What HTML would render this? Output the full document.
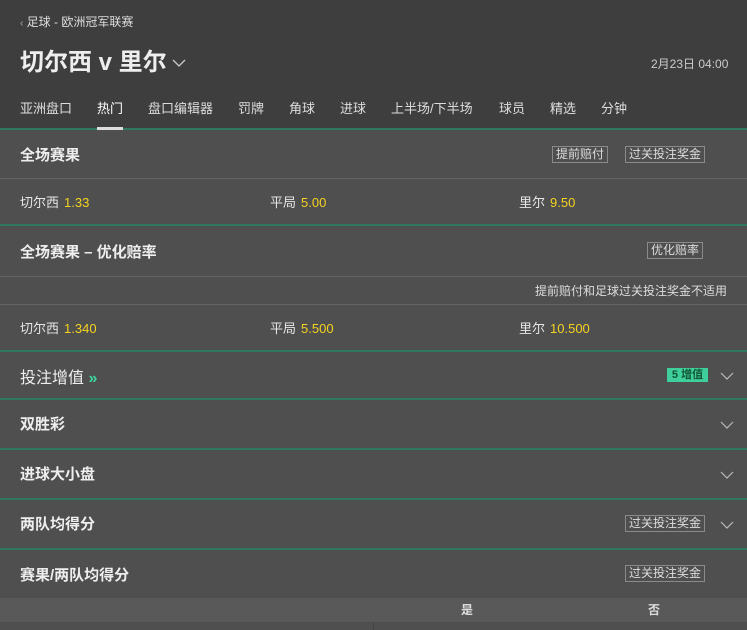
<!DOCTYPE html>
<html><head><meta charset="utf-8"><style>
*{margin:0;padding:0;box-sizing:border-box}
body{width:747px;height:630px;overflow:hidden;background:#4f4f4f;font-family:"Liberation Sans","Noto Sans CJK SC",sans-serif;color:#e6e6e6;position:relative}
.hd{position:absolute;left:0;top:0;width:747px;height:130px;background:#3e3e3e}
.ab{position:absolute;white-space:nowrap}
.g{position:absolute;left:0;width:747px;height:2px;background:#2f7a5f}
.l{position:absolute;left:0;width:747px;height:1px;background:#656565}
.t{font-size:15px;font-weight:bold;color:#eee}
.tag{position:absolute;border:1px solid #8a8a8a;color:#ddd;font-size:12px;line-height:15px;padding:0 3px}
.o{font-size:13px;color:#e6e6e6}
.o b{font-weight:normal;color:#f5d320;margin-left:5px}
.chev{position:absolute;left:720px;width:14px;height:8px}
</style></head><body>
<div class="hd"></div>
<div class="ab" style="left:20px;top:13px;font-size:12px;color:#ddd"><span style="font-size:10px;color:#aaa">‹</span> 足球 - 欧洲冠军联赛</div>
<div class="ab" style="left:20px;top:42px;font-size:24px;font-weight:bold;color:#eee">切尔西 v 里尔</div>
<svg class="ab" style="left:172px;top:59px" width="14" height="8"><path d="M1 1l6 6 6-6" stroke="#ccc" stroke-width="1.3" fill="none"/></svg>
<div class="ab" style="left:651px;top:55px;font-size:12px;color:#ccc">2月23日 04:00</div>
<div class="ab" style="top:98px;left:20px;font-size:13px;color:#ddd">
<span style="position:absolute;left:0">亚洲盘口</span><span style="position:absolute;left:77px;color:#fff">热门</span><span style="position:absolute;left:128px">盘口编辑器</span><span style="position:absolute;left:218px">罚牌</span><span style="position:absolute;left:269px">角球</span><span style="position:absolute;left:320px">进球</span><span style="position:absolute;left:371px">上半场/下半场</span><span style="position:absolute;left:479px">球员</span><span style="position:absolute;left:530px">精选</span><span style="position:absolute;left:581px">分钟</span></div>
<div class="g" style="top:128px"></div>
<div class="ab" style="left:97px;top:127px;width:26px;height:3px;background:#ddd"></div>

<div class="ab t" style="left:20px;top:144px">全场赛果</div>
<div class="tag" style="left:552px;top:146px">提前赔付</div>
<div class="tag" style="left:625px;top:146px">过关投注奖金</div>
<div class="l" style="top:178px"></div>
<div class="ab o" style="left:20px;top:192px">切尔西<b>1.33</b></div>
<div class="ab o" style="left:270px;top:192px">平局<b>5.00</b></div>
<div class="ab o" style="left:519px;top:192px">里尔<b>9.50</b></div>
<div class="g" style="top:224px"></div>

<div class="ab t" style="left:20px;top:241px">全场赛果 – 优化赔率</div>
<div class="tag" style="left:647px;top:242px">优化赔率</div>
<div class="l" style="top:276px"></div>
<div class="ab" style="left:535px;top:282px;font-size:12px;color:#ddd">提前赔付和足球过关投注奖金不适用</div>
<div class="l" style="top:304px"></div>
<div class="ab o" style="left:20px;top:318px">切尔西<b>1.340</b></div>
<div class="ab o" style="left:270px;top:318px">平局<b>5.500</b></div>
<div class="ab o" style="left:519px;top:318px">里尔<b>10.500</b></div>
<div class="g" style="top:350px"></div>

<div class="ab" style="left:20px;top:364px;font-size:16px;color:#eee">投注增值 <span style="color:#3fd6a0;font-weight:bold">»</span></div>
<div class="ab" style="left:667px;top:368px;width:41px;height:14px;background:#3fcf9c;color:#153;font-size:11px;line-height:14px;text-align:center;font-weight:bold">5 增值</div>
<svg class="chev" style="top:372px"><path d="M1 1l6 6 6-6" stroke="#bbb" stroke-width="1.2" fill="none"/></svg>
<div class="g" style="top:398px"></div>
<div class="ab t" style="left:20px;top:413px">双胜彩</div>
<svg class="chev" style="top:421px"><path d="M1 1l6 6 6-6" stroke="#bbb" stroke-width="1.2" fill="none"/></svg>
<div class="g" style="top:448px"></div>
<div class="ab t" style="left:20px;top:463px">进球大小盘</div>
<svg class="chev" style="top:471px"><path d="M1 1l6 6 6-6" stroke="#bbb" stroke-width="1.2" fill="none"/></svg>
<div class="g" style="top:498px"></div>
<div class="ab t" style="left:20px;top:513px">两队均得分</div>
<div class="tag" style="left:625px;top:515px">过关投注奖金</div>
<svg class="chev" style="top:521px"><path d="M1 1l6 6 6-6" stroke="#bbb" stroke-width="1.2" fill="none"/></svg>
<div class="g" style="top:548px"></div>
<div class="ab t" style="left:20px;top:564px">赛果/两队均得分</div>
<div class="tag" style="left:625px;top:565px">过关投注奖金</div>
<div class="ab" style="left:0;top:598px;width:747px;height:24px;background:#595959"></div>
<div class="ab" style="left:461px;top:601px;font-size:12px;font-weight:bold;color:#ddd">是</div>
<div class="ab" style="left:648px;top:601px;font-size:12px;font-weight:bold;color:#ddd">否</div>
<div class="ab" style="left:373px;top:622px;width:1px;height:8px;background:#444"></div>
</body></html>
